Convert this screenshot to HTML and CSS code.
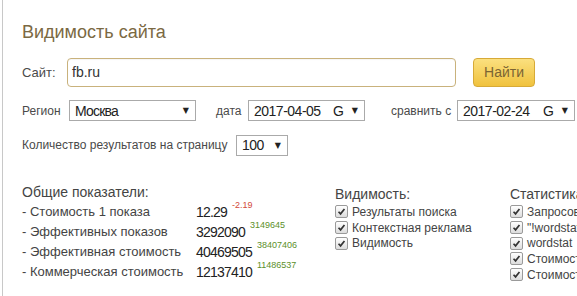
FILE: index.html
```html
<!DOCTYPE html>
<html lang="ru">
<head>
<meta charset="utf-8">
<link rel="stylesheet" href="styles.css">
</head>
<body>
<div class="page">
  <h1 class="title">Видимость сайта</h1>
  <div class="row site-row">
    <span class="label">Сайт:</span>
    <div class="input">fb.ru</div>
    <div class="btn">Найти</div>
  </div>
  <div class="row region-row">
    <span class="label lbl-region">Регион</span>
    <div class="select sel-region"><span class="val">Москва</span><span class="arr">▼</span></div>
    <span class="label lbl-date">дата</span>
    <div class="select sel-date"><span class="val">2017-04-05</span><span class="g">G</span><span class="arr">▼</span></div>
    <span class="label lbl-cmp">сравнить с</span>
    <div class="select sel-date sel-date2"><span class="val">2017-02-24</span><span class="g">G</span><span class="arr">▼</span></div>
  </div>
  <div class="row count-row">
    <span class="label">Количество результатов на страницу</span>
    <div class="select sel-count"><span class="val">100</span><span class="arr">▼</span></div>
  </div>
  <div class="stats">
    <div class="col col-general">
      <div class="head">Общие показатели:</div>
      <div class="stat"><span class="name">- Стоимость 1 показа</span><span class="num">12.29</span><sup class="neg">-2.19</sup></div>
      <div class="stat"><span class="name">- Эффективных показов</span><span class="num">3292090</span><sup class="pos">3149645</sup></div>
      <div class="stat"><span class="name">- Эффективная стоимость</span><span class="num">40469505</span><sup class="pos">38407406</sup></div>
      <div class="stat"><span class="name">- Коммерческая стоимость</span><span class="num">12137410</span><sup class="pos">11486537</sup></div>
    </div>
    <div class="col col-vis">
      <div class="head">Видимость:</div>
      <div class="chk"><span class="box"><svg viewBox="0 0 13 13"><path d="M3 6.8 L5.4 9.3 L10 3.6" /></svg></span>Результаты поиска</div>
      <div class="chk"><span class="box"><svg viewBox="0 0 13 13"><path d="M3 6.8 L5.4 9.3 L10 3.6" /></svg></span>Контекстная реклама</div>
      <div class="chk"><span class="box"><svg viewBox="0 0 13 13"><path d="M3 6.8 L5.4 9.3 L10 3.6" /></svg></span>Видимость</div>
    </div>
    <div class="col col-st">
      <div class="head">Статистика:</div>
      <div class="chk"><span class="box"><svg viewBox="0 0 13 13"><path d="M3 6.8 L5.4 9.3 L10 3.6" /></svg></span>Запросов</div>
      <div class="chk"><span class="box"><svg viewBox="0 0 13 13"><path d="M3 6.8 L5.4 9.3 L10 3.6" /></svg></span>"!wordstat"</div>
      <div class="chk"><span class="box"><svg viewBox="0 0 13 13"><path d="M3 6.8 L5.4 9.3 L10 3.6" /></svg></span>wordstat</div>
      <div class="chk"><span class="box"><svg viewBox="0 0 13 13"><path d="M3 6.8 L5.4 9.3 L10 3.6" /></svg></span>Стоимость</div>
      <div class="chk"><span class="box"><svg viewBox="0 0 13 13"><path d="M3 6.8 L5.4 9.3 L10 3.6" /></svg></span>Стоимость</div>
    </div>
  </div>
</div>
</body>
</html>
```

FILE: styles.css
```css
html, body {
  margin: 0;
  padding: 0;
  background: #fff;
  overflow: hidden;
}
body {
  width: 577px;
  height: 296px;
  font-family: "Liberation Sans", Arial, sans-serif;
  color: #444;
}
.page {
  margin-left: 2px;
  border-left: 1px solid #c8c8c8;
  height: 296px;
  padding-left: 19px;
  box-sizing: border-box;
  width: 700px;
}
.title {
  margin: 0;
  padding-top: 21px;
  font-size: 18px;
  font-weight: normal;
  color: #7b6943;
  line-height: 22px;
  height: 36px;
}
.row {
  display: flex;
  align-items: center;
  white-space: nowrap;
}
.label {
  font-size: 12px;
  color: #4a4a4a;
}
.site-row {
  height: 30px;
}
.site-row .label {
  font-size: 13px;
  width: 45px;
}
.input {
  width: 383px;
  height: 27px;
  border: 1px solid #c9b27c;
  border-radius: 4px;
  font-size: 14px;
  line-height: 27px;
  padding-left: 4px;
  color: #333;
  box-shadow: inset 0 1px 1px rgba(0,0,0,0.04);
}
.btn {
  margin-left: 17px;
  width: 60px;
  height: 27px;
  border: 1px solid #d7aa37;
  border-radius: 4px;
  background: linear-gradient(#fbe07f, #f0c23e);
  color: #7b6433;
  font-size: 14px;
  line-height: 27px;
  text-align: center;
}
.region-row {
  margin-top: 13px;
  height: 21px;
}
.select {
  height: 19px;
  border: 1px solid #aaa;
  display: flex;
  align-items: center;
  font-size: 14px;
  color: #222;
  box-sizing: content-box;
}
.select .val {
  padding-left: 5px;
  flex: 1;
  letter-spacing: -0.5px;
}
.select .g {
  margin-right: 8px;
}
.select .arr {
  font-family: "DejaVu Sans", sans-serif;
  font-size: 8px;
  margin-right: 6px;
}
.lbl-region {
  width: 47px;
}
.sel-region {
  width: 125px;
}
.sel-region .val {
  letter-spacing: -0.8px;
}
.lbl-date {
  margin-left: 20px;
  width: 32px;
}
.sel-date {
  width: 115px;
}
.lbl-cmp {
  margin-left: 26px;
  width: 66px;
}
.sel-date2 {
  width: 116px;
}
.count-row {
  margin-top: 13px;
  height: 22px;
}
.count-row .label {
  width: 214px;
}
.sel-count {
  width: 50px;
}
.stats {
  display: flex;
  margin-top: 26px;
}
.col .head {
  font-size: 14px;
  color: #444;
  height: 20px;
  line-height: 20px;
}
.col-general {
  width: 313px;
}
.stat {
  height: 20px;
  line-height: 20px;
  display: flex;
  align-items: flex-start;
  white-space: nowrap;
}
.stat .name {
  width: 174px;
  font-size: 13px;
  color: #444;
}
.stat .num {
  font-size: 14px;
  letter-spacing: -0.8px;
  color: #222;
}
.stat sup {
  font-size: 9px;
  line-height: 10px;
  margin-left: 5px;
  position: relative;
  top: -2px;
  vertical-align: top;
}
.neg { color: #d24a3a; }
.pos { color: #5c8f2a; }
.col-vis {
  width: 175px;
}
.col-vis .head, .col-st .head {
  height: 22px;
  line-height: 24px;
}
.chk {
  height: 15.7px;
  display: flex;
  align-items: center;
  font-size: 12px;
  color: #444;
  white-space: nowrap;
}
.box {
  width: 11px;
  height: 11px;
  border: 1px solid #9a9a9a;
  border-radius: 2px;
  background: linear-gradient(#fff, #dcdcdc);
  margin-right: 4px;
  display: inline-flex;
}
.box svg {
  width: 11px;
  height: 11px;
}
.box path {
  fill: none;
  stroke: #333;
  stroke-width: 2;
}
```
